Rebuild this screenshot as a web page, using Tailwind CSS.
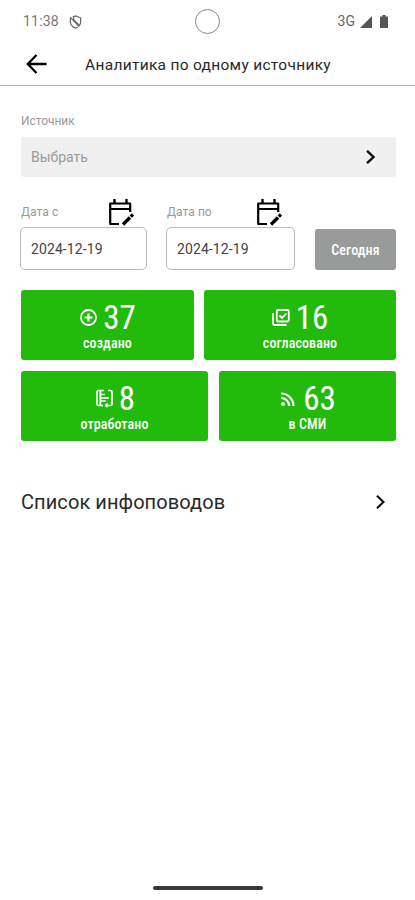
<!DOCTYPE html>
<html lang="ru">

<head>
    <meta charset="UTF-8" />
    <meta name="viewport" content="width=device-width, initial-scale=1.0" />
    <title>Аналитика по одному источнику</title>
    <script src="https://cdn.jsdelivr.net/npm/@tailwindcss/browser@4"></script>
</head>

<body class="bg-white font-[Roboto,sans-serif] text-black">
    <div class="flex flex-col w-[415px] h-[900px] overflow-hidden">
        <!-- status bar -->
        <div class="grid grid-cols-3 items-center h-[43px] pl-[23px] pr-[27px] text-[#777]">
            <div class="flex items-center gap-[10px]">
                <span class="text-[14px] tracking-[0.2px]">11:38</span>
                <svg class="w-[13px] h-[14px]" viewBox="0 0 13 15" fill="none" stroke="#666" stroke-width="1.300">
                    <path d="M3.500 2 6.500 1 12 3v4.500c0 1.500-.6 2.900-1.500 4M8.800 13c-.7.500-1.500.8-2.300 1C3.500 12.800 1 10.500 1 7.500V3" />
                    <path d="M1 2.500 10.500 12.500M4.500 2V5l6.500 6.500" />
                </svg>
            </div>
            <div class="justify-self-center w-[25px] h-[25px] ml-[5px] rounded-full border border-[#8a8a8a]"></div>
            <div class="flex items-center justify-end">
                <span class="text-[14px] text-[#666]">3G</span>
                <svg class="w-[12px] h-[12px] ml-[5px]" viewBox="0 0 12 12" fill="#555"><path d="M12 0v12H0Z" /></svg>
                <svg class="w-[8px] h-[13px] ml-[8px]" viewBox="0 0 8 13" fill="#555"><path d="M2.500 0h3v1.500H8V13H0V1.500h2.500Z" /></svg>
            </div>
        </div>

        <!-- header -->
        <div class="flex items-center h-[43px] pl-[26px] border-b border-[#aaa]">
            <svg class="w-[21px] h-[20px]" viewBox="0 0 21 20" fill="none" stroke="#000" stroke-width="2.300">
                <path d="M20.500 10H2M10.500 1 1.800 10l8.700 9" />
            </svg>
            <h1 class="mt-[3px] ml-[38px] text-[15.500px] tracking-[0.3px] text-[#2a2a2a] whitespace-nowrap">Аналитика по одному источнику</h1>
        </div>

        <div class="flex flex-col px-[20px]">
            <!-- source -->
            <label class="mt-[27px] ml-[1px] text-[12px] leading-[16px] tracking-[-0.050px] text-[#999]">Источник</label>
            <button class="flex items-center justify-between mt-[8px] ml-[1px] mr-[-1px] h-[40px] pl-[10px] pr-[21px] rounded-[3px] bg-[#f0f0f0]">
                <span class="text-[14px] text-[#999]">Выбрать</span>
                <svg class="w-[9px] h-[14px]" viewBox="0 0 9 14" fill="none" stroke="#111" stroke-width="2.400"><path d="m1 .8 6.500 6.200L1 13.200" /></svg>
            </button>

            <!-- dates -->
            <div class="flex items-end mt-[22px] mr-[-1px] h-[71px]">
                <div class="w-[127px] shrink-0">
                    <div class="flex items-center justify-between h-[26px] pl-[1px] pr-[13px]">
                        <label class="text-[12px] tracking-[0.050px] text-[#999]">Дата с</label>
                        <svg class="w-[26px] h-[27px]" viewBox="0 0 26 27" fill="none" stroke="#000" stroke-width="2.200">
                            <path d="M11 25H2.200V4.500h20V13M2.200 10h20" stroke-linejoin="round" />
                            <path d="M6.500 0v4.500M18.500 0v4.500" stroke-width="2.400" />
                            <path d="m15 25.500 7-7" stroke-width="3.400" />
                            <path d="m22.800 17.700 2.200-2.200" stroke-width="3.200" />
                        </svg>
                    </div>
                    <div class="flex items-center mt-[2px] h-[43px] pt-[2px] pl-[10px] rounded-[5px] border border-[#bbb] text-[14px] tracking-[0.1px] text-[#444]">2024-12-19</div>
                </div>
                <div class="w-[129px] ml-[19px] shrink-0">
                    <div class="flex items-center justify-between h-[26px] pl-[1px] pr-[13px]">
                        <label class="text-[12px] tracking-[0.050px] text-[#999]">Дата по</label>
                        <svg class="w-[26px] h-[27px]" viewBox="0 0 26 27" fill="none" stroke="#000" stroke-width="2.200">
                            <path d="M11 25H2.200V4.500h20V13M2.200 10h20" stroke-linejoin="round" />
                            <path d="M6.500 0v4.500M18.500 0v4.500" stroke-width="2.400" />
                            <path d="m15 25.500 7-7" stroke-width="3.400" />
                            <path d="m22.800 17.700 2.200-2.200" stroke-width="3.200" />
                        </svg>
                    </div>
                    <div class="flex items-center mt-[2px] h-[43px] pt-[2px] pl-[10px] rounded-[5px] border border-[#bbb] text-[14px] tracking-[0.1px] text-[#444]">2024-12-19</div>
                </div>
                <button class="w-[81px] h-[41px] pt-[2px] ml-[20px] shrink-0 rounded-[3px] bg-[#999b9b] text-white text-[14px] font-medium tracking-[0.1px] [font-stretch:75%]">Сегодня</button>
            </div>

            <!-- counters -->
            <div class="flex flex-col gap-[11px] mt-[20px] ml-[1px] mr-[-1px] text-white [font-stretch:75%]">
                <div class="flex gap-[10px]">
                    <div class="flex flex-col items-center w-[173px] h-[70px] pt-[10px] rounded-[3px] bg-[#22bb0c]">
                        <div class="flex items-center gap-[6px] h-[35px] pl-[1px]">
                            <svg class="w-[17px] h-[17px]" viewBox="0 0 17 17" fill="none" stroke="#fff" stroke-width="1.800"><circle cx="8.500" cy="8.500" r="7.500" /><path d="M8.500 4.500v8M4.500 8.500h8" stroke-width="2.200" /></svg>
                            <span class="text-[33px] leading-[36px]">37</span>
                        </div>
                        <span class="text-[14px] leading-[16px] font-medium tracking-[0.1px]">создано</span>
                    </div>
                    <div class="flex flex-col items-center w-[192px] h-[70px] pt-[10px] rounded-[3px] bg-[#22bb0c]">
                        <div class="flex items-center gap-[6px] h-[35px]">
                            <svg class="w-[18px] h-[17px]" viewBox="0 0 18 17" fill="none" stroke="#fff" stroke-width="1.800"><rect x="4.800" y="1" width="12" height="11.500" rx="1.500" /><path d="M1 4v10.500Q1 16 2.500 16h12M7.500 6.500l2.500 2.500L14.300 4.500" /></svg>
                            <span class="text-[33px] leading-[36px]">16</span>
                        </div>
                        <span class="text-[14px] leading-[16px] font-medium tracking-[0.1px]">согласовано</span>
                    </div>
                </div>
                <div class="flex gap-[11px]">
                    <div class="flex flex-col items-center w-[187px] h-[70px] pt-[10px] rounded-[3px] bg-[#22bb0c]">
                        <div class="flex items-center gap-[6px] h-[35px] pl-[2px]">
                            <svg class="w-[17px] h-[19px]" viewBox="0 0 17 19" fill="none" stroke="#fff" stroke-width="1.700"><path d="M8 1.500H2.500Q1 1.500 1 3v12q0 1.500 1.500 1.500H7M12 1.500h2.500Q16 1.500 16 3v12q0 1.500-1.500 1.500H9M4.300 1.500v15M4.300 5.500h4.500M4.300 8.800h8.500M4.300 12h5.500" /><path d="M11.500 13.500v5.500l-3-2.500Z" fill="#fff" stroke="none" /></svg>
                            <span class="text-[33px] leading-[36px]">8</span>
                        </div>
                        <span class="text-[14px] leading-[16px] font-medium tracking-[0.1px]">отработано</span>
                    </div>
                    <div class="flex flex-col items-center w-[177px] h-[70px] pt-[10px] rounded-[3px] bg-[#22bb0c]">
                        <div class="flex items-center gap-[8px] h-[35px] pl-[2px]">
                            <svg class="w-[14px] h-[14px]" viewBox="0 0 14 14" fill="none" stroke="#fff" stroke-width="2.200"><circle cx="2" cy="12" r="2" fill="#fff" stroke="none" /><path d="M0 5.800A8.200 8.200 0 0 1 8.200 14M0 1.500A12.500 12.500 0 0 1 12.500 14" /></svg>
                            <span class="text-[33px] leading-[36px]">63</span>
                        </div>
                        <span class="text-[14px] leading-[16px] font-medium tracking-[0.1px]">в СМИ</span>
                    </div>
                </div>
            </div>

            <!-- list link -->
            <a class="flex items-center justify-between mt-[46px] h-[30px] pl-[1px] pr-[10px]">
                <span class="text-[20px] tracking-[0.080px] text-[#2a2a2a]">Список инфоповодов</span>
                <svg class="w-[9px] h-[14px]" viewBox="0 0 9 14" fill="none" stroke="#111" stroke-width="2.200"><path d="m1 .8 6.500 6.200L1 13.200" /></svg>
            </a>
        </div>

        <!-- gesture bar -->
        <div class="mt-auto mb-[10px] ml-[153px] w-[110px] h-[4px] rounded-full bg-[#3a3a3c]"></div>
    </div>
</body>

</html>
